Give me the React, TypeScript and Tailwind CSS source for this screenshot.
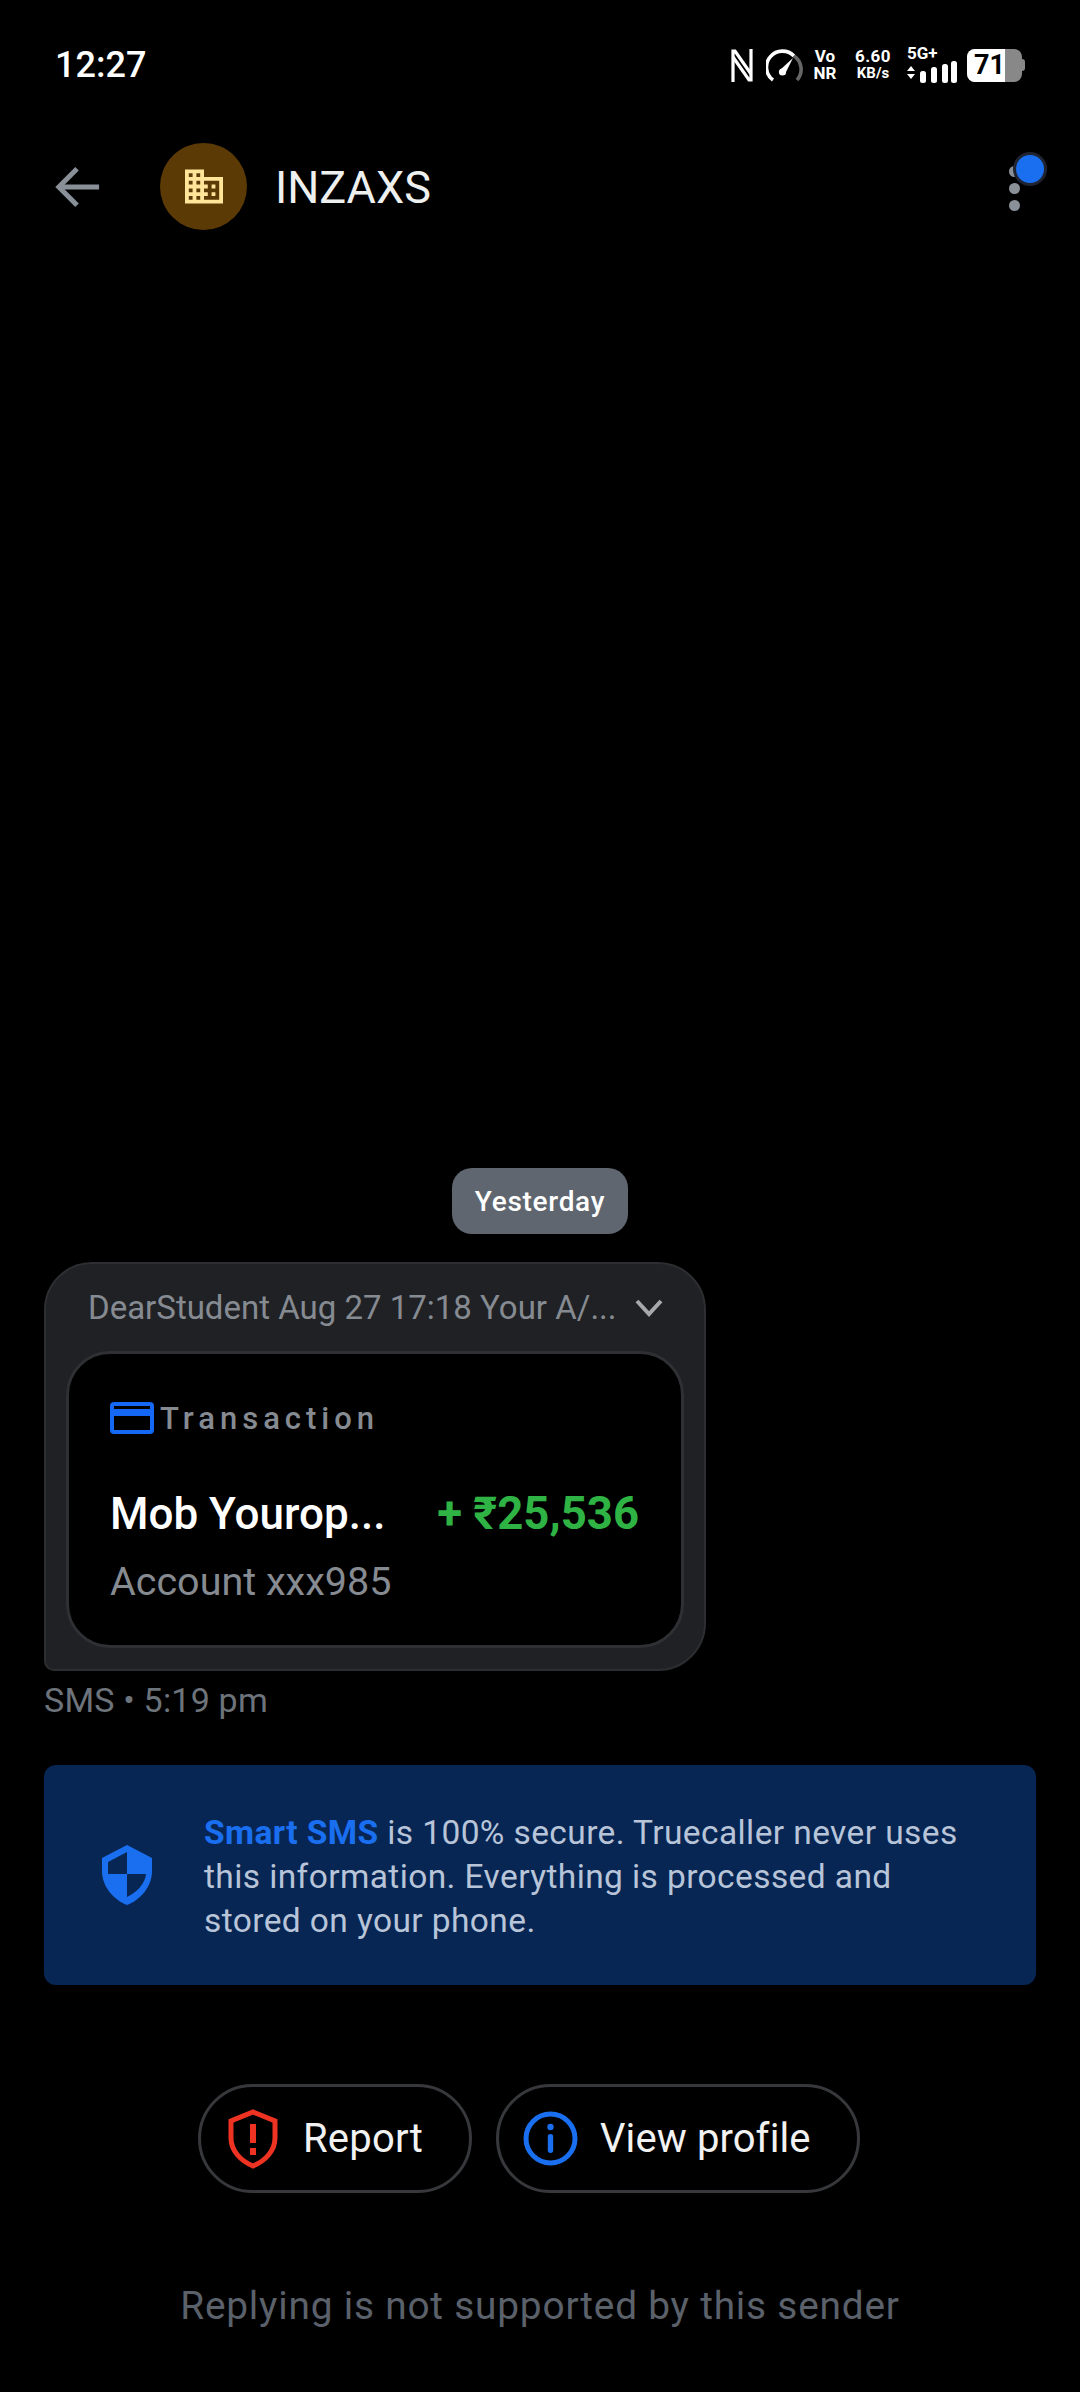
import React from "react";

const font = { fontFamily: "Roboto, 'Noto Sans', sans-serif" };

function StatusIcons() {
  return (
    <div className="flex items-center h-[40px] text-white">
      <svg width="22" height="33" viewBox="0 0 22 33" className="mr-[13px]" fill="none" stroke="#fff" strokeWidth="3.2">
        <path d="M2 33V2h2L20 25" />
        <path d="M2 8L18 31h2V0" />
      </svg>
      <svg width="37" height="33" viewBox="0 0 37 33" className="mr-[9px]" fill="none">
        <path d="M7 31A16 16 0 1 1 28 7" stroke="#fff" strokeWidth="3.6" />
        <path d="M28 7A16 16 0 0 1 31 31" stroke="#666" strokeWidth="3.6" />
        <path d="M14 21L27 9 19 25z" fill="#fff" />
        <circle cx="16.5" cy="23" r="3.6" fill="#fff" />
      </svg>
      <div className="w-[26px] mr-[15px] flex flex-col items-center text-[17px] font-bold leading-[17px]">
        <span>Vo</span>
        <span>NR</span>
      </div>
      <div className="w-[40px] mr-[14px] flex flex-col items-center font-bold leading-[17px]">
        <span className="text-[17px] tracking-[0.5px]">6.60</span>
        <span className="text-[15px]">KB/s</span>
      </div>
      <div className="w-[50px] mr-[10px] flex flex-col">
        <span className="text-[17px] font-bold leading-[15px]">5G+</span>
        <svg width="50" height="24" viewBox="0 0 50 24" fill="#fff">
          <path d="M0 10l4-5 4 5zM0 13l4 5 4-5z" />
          <rect x="13" y="10" width="6" height="12" rx="2.5" />
          <rect x="24" y="6" width="6" height="16" rx="2.5" />
          <rect x="35" y="3" width="6" height="19" rx="2.5" />
          <rect x="44" y="0" width="6" height="22" rx="2.5" />
        </svg>
      </div>
      <div className="flex items-center">
        <div className="relative flex h-[33px] w-[55px] overflow-hidden rounded-[8px] bg-[#888888]">
          <div className="flex w-[38px] justify-end bg-white text-[27px] font-bold leading-[33px] text-black">
            71
          </div>
        </div>
        <div className="h-[12px] w-[3px] rounded-r-[3px] bg-[#888888]" />
      </div>
    </div>
  );
}

export default function App() {
  return (
    <div className="flex h-[2392px] w-[1080px] flex-col overflow-hidden bg-black" style={font}>
      <div className="flex h-[40px] mt-[45px] items-center justify-between pl-[55px] pr-[55px]">
        <span className="text-[36px] font-medium leading-none text-white">12:27</span>
        <StatusIcons />
      </div>

      <header className="relative mt-[58px] flex h-[87px] items-center pl-[55px]">
        <svg width="46" height="46" viewBox="0 0 24 24" fill="none" stroke="#8a9098" strokeWidth="2.600">
          <path d="M23 12H2" />
          <path d="M11.5 2.5L2 12l9.500 9.500" />
        </svg>
        <div className="ml-[59px] flex h-[87px] w-[87px] items-center justify-center rounded-full bg-[#5c3a06]">
          <svg width="38" height="35" viewBox="2 3 20 18" fill="#ffe59a">
            <path d="M12 7V3H2v18h20V7H12zM6 19H4v-2h2v2zm0-4H4v-2h2v2zm0-4H4V9h2v2zm0-4H4V5h2v2zm4 12H8v-2h2v2zm0-4H8v-2h2v2zm0-4H8V9h2v2zm0-4H8V5h2v2zm10 12h-8v-2h2v-2h-2v-2h2v-2h-2V9h8v10zm-2-8h-2v2h2v-2zm0 4h-2v2h2v-2z" />
          </svg>
        </div>
        <h1 className="ml-[28px] mt-[2px] text-[45px] font-normal leading-none text-[#eef0f0]">INZAXS</h1>
        <div className="absolute left-[1009px] top-[23px] flex flex-col gap-[6px]">
          <span className="h-[11px] w-[11px] rounded-full bg-[#8a9098]" />
          <span className="h-[11px] w-[11px] rounded-full bg-[#8a9098]" />
          <span className="h-[11px] w-[11px] rounded-full bg-[#8a9098]" />
        </div>
        <span className="absolute left-[1013px] top-[9px] h-[34px] w-[34px] rounded-full border-[3px] border-[#1f2430] bg-[#1a6ff0]" />
      </header>

      <div className="mt-[938px] flex justify-center">
        <div className="flex h-[66px] w-[176px] items-center justify-center rounded-[20px] bg-[#5f666f] pt-[2px] text-[28px] font-medium tracking-[0.7px] text-white">
          Yesterday
        </div>
      </div>

      <section className="ml-[44px] mt-[28px] h-[409px] w-[662px] rounded-[48px] rounded-bl-[10px] border-2 border-[#2d2e32] bg-[#202125] px-[20px]">
        <div className="flex h-[87px] items-center pl-[22px]">
          <span className="w-[529px] whitespace-nowrap text-[33px] text-[#868b92]">
            DearStudent Aug 27 17:18 Your A/...
          </span>
          <svg width="28" height="20" viewBox="0 0 28 20" className="ml-[18px]" fill="none" stroke="#a6a8ab" strokeWidth="4">
            <path d="M2 3l12 13L26 3" />
          </svg>
        </div>
        <div className="h-[297px] rounded-[44px] border-[3px] border-[#2f3034] bg-black pl-[41px] pr-[42px]">
          <div className="mt-[47px] flex items-center">
            <svg width="44" height="32" viewBox="0 0 44 32" fill="none">
              <rect x="2" y="2" width="40" height="28" rx="2" stroke="#1568f5" strokeWidth="4" />
              <rect x="2" y="7" width="40" height="7" fill="#1568f5" />
            </svg>
            <span className="ml-[6px] mt-[2px] text-[31px] font-medium leading-none tracking-[5px] text-[#868b92]">
              Transaction
            </span>
          </div>
          <div className="mt-[55px] flex items-center justify-between">
            <span className="text-[44px] font-medium leading-[50px] text-white">Mob Yourop...</span>
            <span className="text-[45.500px] font-bold leading-[50px] text-[#2fb344]">+ ₹25,536</span>
          </div>
          <div className="mt-[23px] text-[39.500px] leading-none text-[#868b92]">Account xxx985</div>
        </div>
      </section>

      <div className="ml-[44px] mt-[10px] text-[34px] leading-[38px] tracking-[0.2px] text-[#6d737b]">SMS • 5:19 pm</div>

      <section className="ml-[44px] mt-[46px] flex h-[220px] w-[992px] items-center rounded-[12px] bg-[#072654]">
        <svg width="50" height="60" viewBox="0 0 50 60" className="ml-[58px] shrink-0">
          <path
            d="M25 0L50 13V26C50 42 38 55 25 60 12 55 0 42 0 26V13z"
            fill="#1a6ff0"
          />
          <path d="M25 7L6 17V29H25zM25 29V52C35 47 43 39 44 29z" fill="#072654" />
        </svg>
        <p className="ml-[52px] mt-[4px] w-[765px] text-[33.500px] leading-[44px] tracking-[0.4px] text-[#b8c4d8]">
          <span className="font-bold text-[#1a6ff0]">Smart SMS</span> is 100% secure. Truecaller never uses this
          information. Everything is processed and stored on your phone.
        </p>
      </section>

      <div className="mt-[99px] ml-[198px] flex gap-[24px]">
        <button className="flex h-[109px] w-[274px] items-center rounded-full border-[3px] border-[#37383b] pl-[27px] text-[40px] tracking-[0.2px] text-[#f2f2f2]">
          <svg width="50" height="60" viewBox="0 0 50 60" fill="none">
            <path
              d="M25 3L47 12V29C47 42 37 52 25 57 13 52 3 42 3 29V12z"
              stroke="#ee3322"
              strokeWidth="5"
            />
            <rect x="22" y="15" width="6" height="19" fill="#ee3322" />
            <rect x="22" y="39" width="6" height="7" fill="#ee3322" />
          </svg>
          <span className="ml-[25px]">Report</span>
        </button>
        <button className="flex h-[109px] w-[364px] items-center rounded-full border-[3px] border-[#37383b] pl-[24px] text-[40px] tracking-[0.1px] text-[#f2f2f2]">
          <svg width="55" height="55" viewBox="0 0 55 55" fill="none">
            <circle cx="27.5" cy="27.500" r="24.500" stroke="#1a6ff0" strokeWidth="5" />
            <circle cx="27.500" cy="16" r="3.200" fill="#1a6ff0" />
            <rect x="24.800" y="23" width="5.400" height="19" rx="2.700" fill="#1a6ff0" />
          </svg>
          <span className="ml-[22px]">View profile</span>
        </button>
      </div>

      <div className="mt-[91px] text-center text-[38.800px] leading-[44px] tracking-[0.8px] text-[#5b616a]">
        Replying is not supported by this sender
      </div>
    </div>
  );
}
